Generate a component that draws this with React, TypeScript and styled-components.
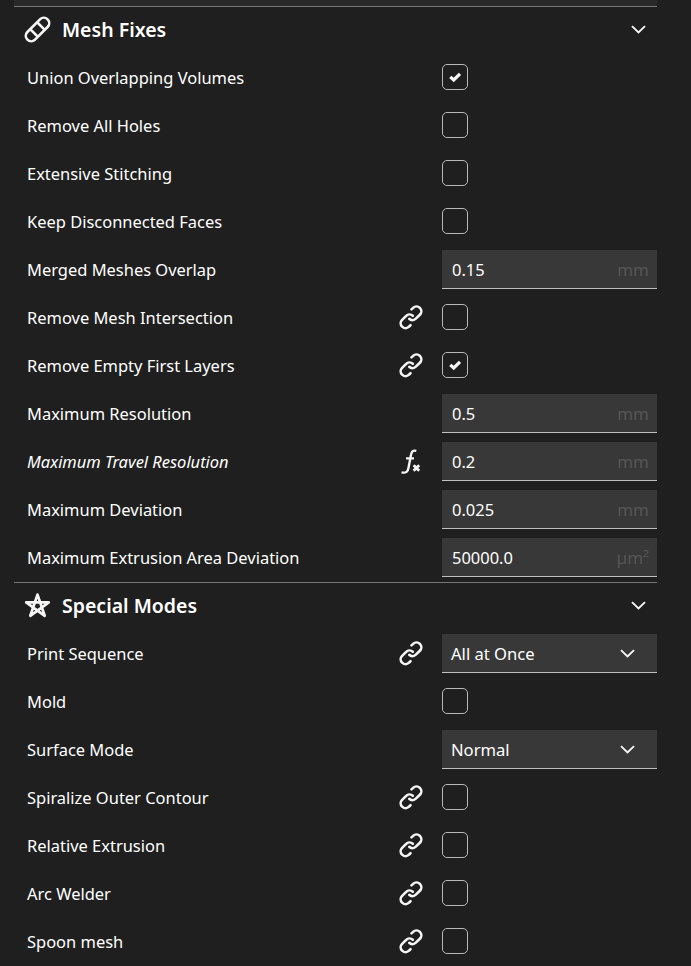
import React from 'react';
import styled, { createGlobalStyle } from 'styled-components';

const Global = createGlobalStyle`
  * { box-sizing: border-box; }
  body { margin: 0; background: #1f1f1f; overflow: hidden; }
`;

const Panel = styled.main`
  width: 691px;
  height: 966px;
  overflow: hidden;
  padding: 0 34px 0 14px;
  background: #1f1f1f;
  color: #fff;
  font-family: 'Noto Sans', sans-serif;
  font-size: 16.47px;
`;

const PreviousRow = styled.div`
  height: 6px;
  background: #292929;
`;

const Header = styled.header`
  display: flex;
  align-items: center;
  height: 48px;
  padding: 0 11px 2px 10px;
  border-top: 1px solid #767676;
`;

const Title = styled.h2`
  flex: 1;
  margin: 0 0 0 11px;
  font-size: 19.5px;
  line-height: 26px;
  font-weight: 600;
`;

const Row = styled.div`
  display: grid;
  grid-template-columns: 371px 57px 215px;
  height: 48px;
`;

const Label = styled.label<{ $italic?: boolean }>`
  padding-left: 13px;
  line-height: 47px;
  white-space: nowrap;
  font-style: ${(p) => (p.$italic ? 'italic' : 'normal')};
`;

const Marker = styled.span`
  display: flex;
  padding: 11px 0 0 14px;
`;

const Check = styled.span`
  display: grid;
  place-items: center;
  width: 26px;
  height: 26px;
  margin-top: 10px;
  border: 1px solid #b8b8b8;
  border-radius: 5px;
`;

const Field = styled.div`
  display: flex;
  align-items: center;
  justify-content: space-between;
  height: 39px;
  margin-top: 4px;
  padding: 1px 8px 0 10px;
  background: #383838;
  border-bottom: 1px solid #c0c0c0;
`;

const Value = styled.span`
  line-height: 37px;
`;

const Unit = styled.span`
  color: #555;
  font-size: 17px;
  line-height: 37px;
`;

const Select = styled(Field)`
  padding: 1px 22px 0 9px;

  ${Value} {
    font-size: 16.6px;
  }
`;

const Svg = styled.svg`
  display: block;
  flex: none;
  overflow: visible;
  fill: none;
  stroke: #f5f5f5;
`;

const Chevron = () => (
  <Svg width="15" height="9" viewBox="0 0 15 9" strokeWidth="1.9">
    <path d="M1 1.1 7.5 7.4 14 1.1" />
  </Svg>
);

const Tick = () => (
  <Svg width="12" height="10" viewBox="0 0 12 10" strokeWidth="3.3">
    <path d="M1.3 4.9 4.7 8 11 1.9" />
  </Svg>
);

const Link = () => (
  <Svg width="24" height="24" viewBox="0 0 24 24" strokeWidth="2.6" strokeLinecap="round">
    <path d="M10.2 13.8a4.7 4.7 0 0 0 6.6-.1l4.1-4a4.8 4.8 0 0 0-6.8-6.8l-1.6 1.5" />
    <path d="M13.8 10.8a4.7 4.7 0 0 0-6.6.1l-4.1 4a4.8 4.8 0 0 0 6.8 6.8l1.6-1.5" />
  </Svg>
);

const Formula = () => (
  <Svg width="24" height="26" viewBox="0 0 24 26" strokeWidth="2.4">
    <path d="M17.3 1.8c-3.7-.8-4.7.8-5.3 4.1L9.5 18.8c-.6 3.7-2.3 5.6-7 4.5M7 9.4h8" />
    <path d="m14.6 16.2 5.6 5.6M20.2 16.2l-5.6 5.6" strokeWidth="2.7" />
  </Svg>
);

const Bandage = () => (
  <Svg width="27" height="27" viewBox="0 0 27 27" strokeWidth="2.6">
    <g transform="rotate(-45 13.5 13.5)">
      <rect x="-.8" y="8.1" width="28.6" height="10.8" rx="5.4" />
      <path d="M8.6 8.1v10.8M18.4 8.1v10.8" />
    </g>
  </Svg>
);

const Star = () => (
  <Svg width="27" height="27" viewBox="0 0 27 27" strokeWidth="2.7" strokeLinejoin="round">
    <path d="M13.5 2.6 6.3 23.8 24.8 10.4H2.2L20.7 23.8Z" />
  </Svg>
);

type Setting = {
  label: string;
  italic?: boolean;
  marker?: 'link' | 'formula';
  checked?: boolean;
  value?: string;
  unit?: string;
  option?: string;
};

const meshFixes: Setting[] = [
  { label: 'Union Overlapping Volumes', checked: true },
  { label: 'Remove All Holes' },
  { label: 'Extensive Stitching' },
  { label: 'Keep Disconnected Faces' },
  { label: 'Merged Meshes Overlap', value: '0.15', unit: 'mm' },
  { label: 'Remove Mesh Intersection', marker: 'link' },
  { label: 'Remove Empty First Layers', marker: 'link', checked: true },
  { label: 'Maximum Resolution', value: '0.5', unit: 'mm' },
  { label: 'Maximum Travel Resolution', italic: true, marker: 'formula', value: '0.2', unit: 'mm' },
  { label: 'Maximum Deviation', value: '0.025', unit: 'mm' },
  { label: 'Maximum Extrusion Area Deviation', value: '50000.0', unit: 'µm²' },
];

const specialModes: Setting[] = [
  { label: 'Print Sequence', marker: 'link', option: 'All at Once' },
  { label: 'Mold' },
  { label: 'Surface Mode', option: 'Normal' },
  { label: 'Spiralize Outer Contour', marker: 'link' },
  { label: 'Relative Extrusion', marker: 'link' },
  { label: 'Arc Welder', marker: 'link' },
  { label: 'Spoon mesh', marker: 'link' },
];

const Control = ({ setting: s }: { setting: Setting }) => {
  if (s.option) return <Select><Value>{s.option}</Value><Chevron /></Select>;
  if (s.value) return <Field><Value>{s.value}</Value><Unit>{s.unit}</Unit></Field>;
  return <Check>{s.checked && <Tick />}</Check>;
};

const Section = ({ title, icon, settings }: { title: string; icon: React.ReactNode; settings: Setting[] }) => (
  <section>
    <Header>{icon}<Title>{title}</Title><Chevron /></Header>
    {settings.map((s) => (
      <Row key={s.label}>
        <Label $italic={s.italic}>{s.label}</Label>
        <Marker>{s.marker === 'link' ? <Link /> : s.marker === 'formula' ? <Formula /> : null}</Marker>
        <Control setting={s} />
      </Row>
    ))}
  </section>
);

export default function App() {
  return (
    <Panel>
      <Global />
      <PreviousRow />
      <Section title="Mesh Fixes" icon={<Bandage />} settings={meshFixes} />
      <Section title="Special Modes" icon={<Star />} settings={specialModes} />
    </Panel>
  );
}
